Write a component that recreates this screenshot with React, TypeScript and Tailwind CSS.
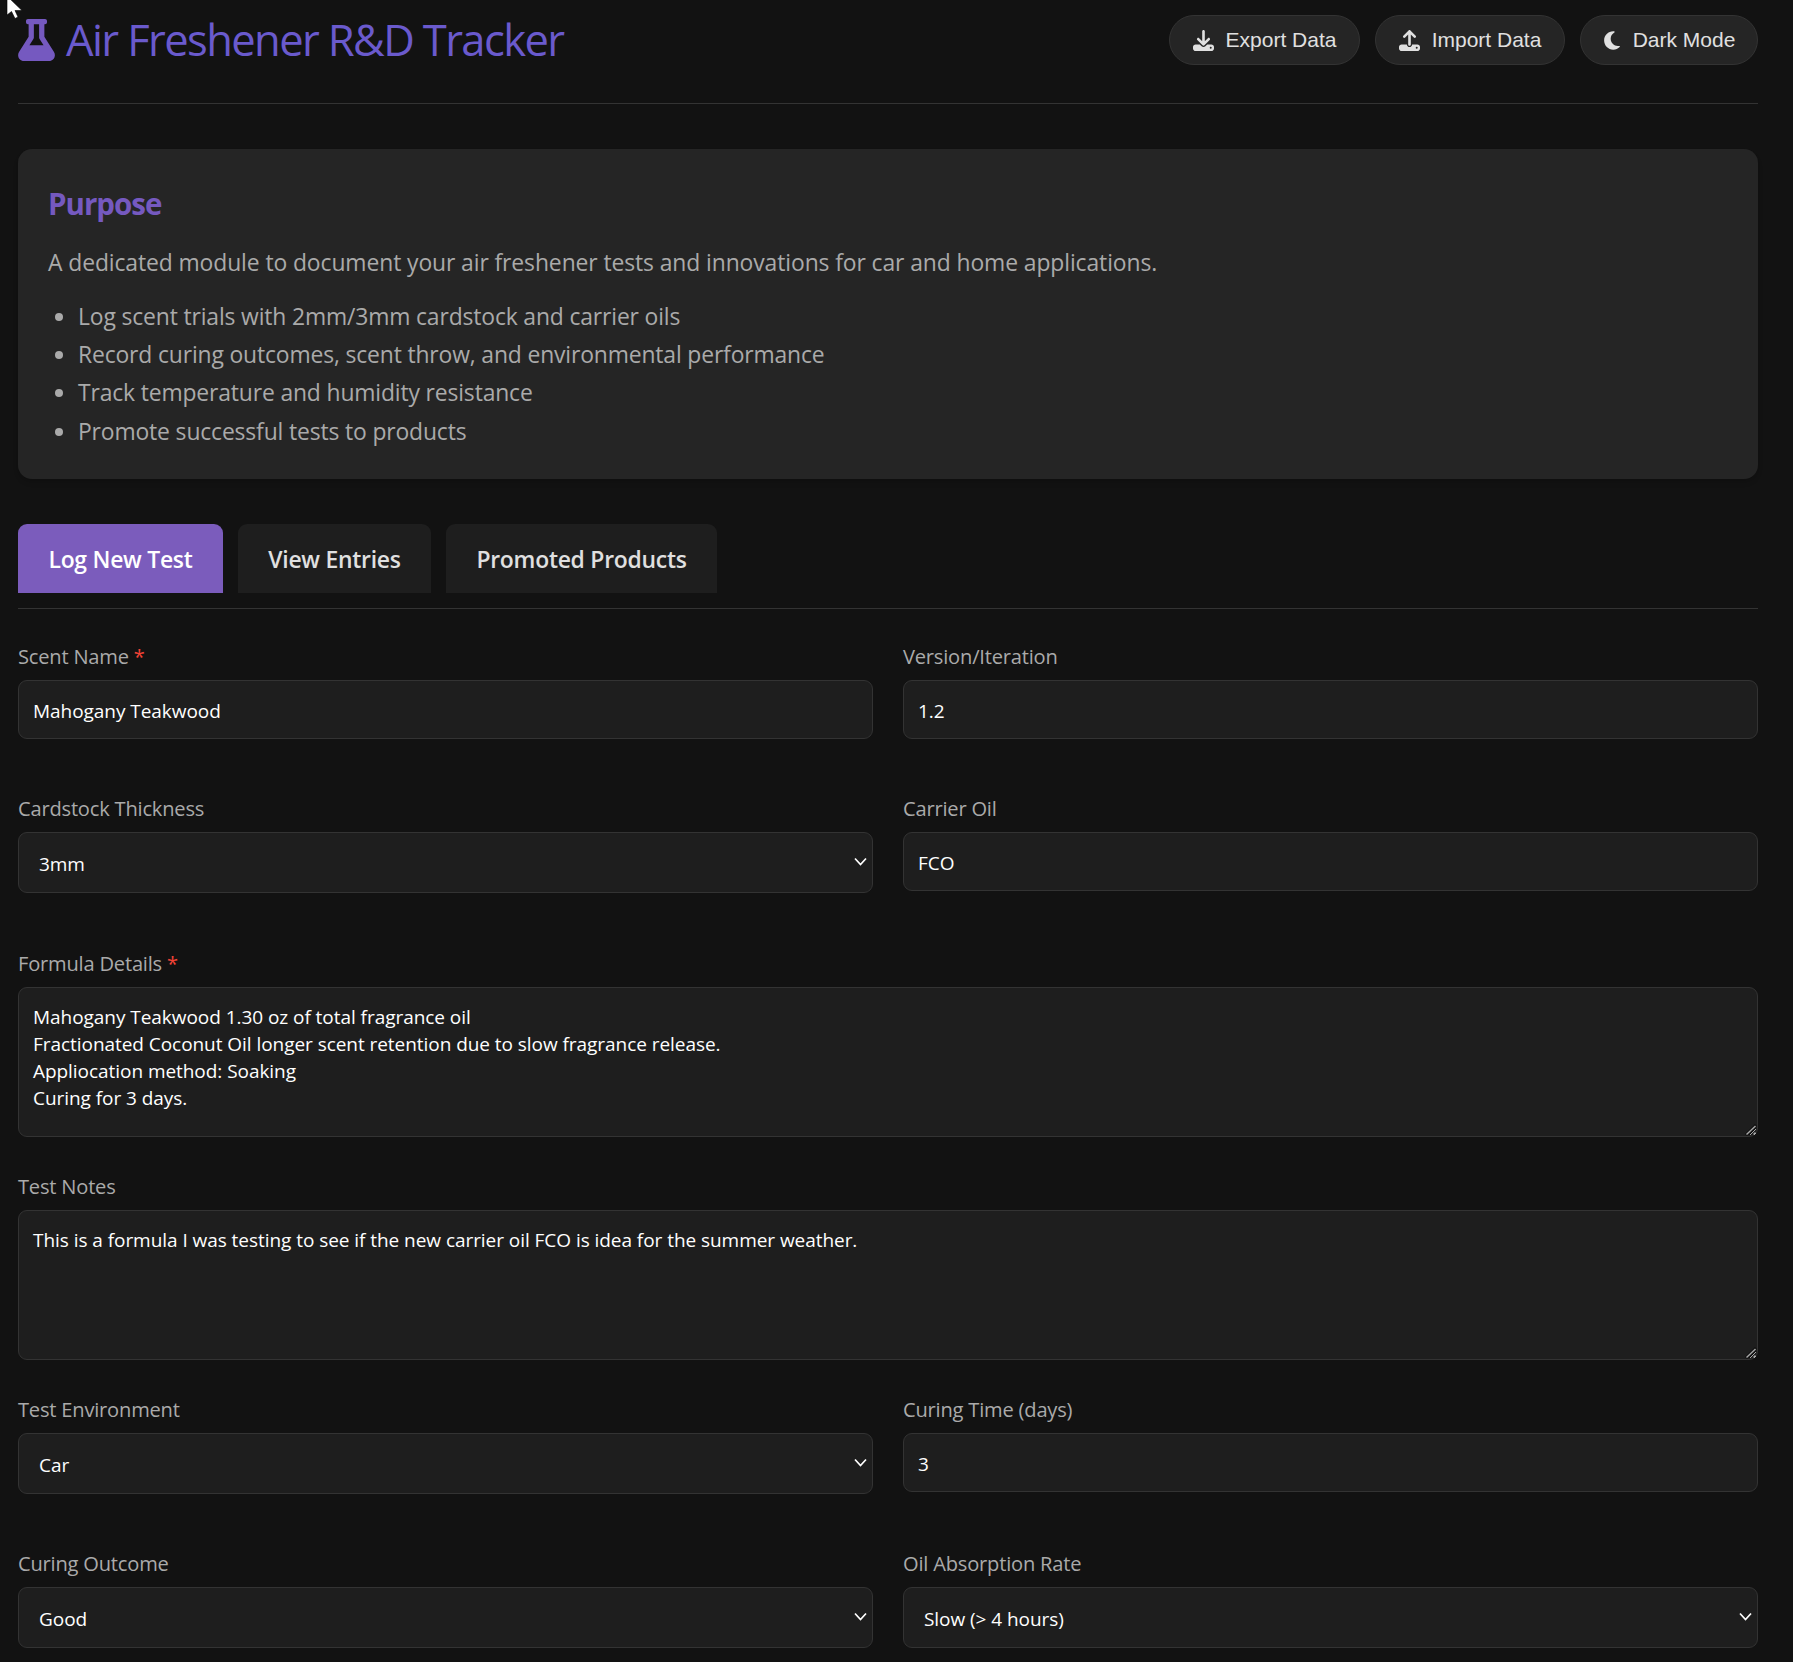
import { FaFlask } from 'react-icons/fa';
import { FaDownload, FaMoon, FaUpload } from 'react-icons/fa6';

const inputCls =
    'block w-full h-[59px] pl-[14px] pr-[14px] pt-[2px] rounded-[9px] border border-[#333333] bg-[#1e1e1e] text-[19px] tracking-[-0.05px] text-white outline-none';
const selectCls =
    'block w-full h-[61px] pl-[20px] pr-[30px] pt-[2px] appearance-none rounded-[9px] border border-[#333333] bg-[#1e1e1e] text-[19px] tracking-[-0.05px] text-white outline-none';
const textareaCls =
    'block w-full h-[150px] px-[14px] pt-[16px] pb-[16px] rounded-[9px] border border-[#333333] bg-[#1e1e1e] text-[19px] leading-[27px] tracking-[-0.05px] text-white outline-none [color-scheme:dark]';

const Label = ({ text, required }: { text: string; required?: boolean }) => (
    <label className="block h-[24px] mb-[12px] text-[20.1px] leading-[26px] tracking-[-0.2px] text-[#aaaaaa]">
        {text}
        {required && <span className="text-[#f44336]"> *</span>}
    </label>
);

const Select = ({ value, options }: { value: string; options: string[] }) => (
    <div className="relative">
        <select className={selectCls} defaultValue={value}>
            {options.map((o) => (
                <option key={o}>{o}</option>
            ))}
        </select>
        <svg className="pointer-events-none absolute right-[6px] top-[25px]" width="13" height="9" viewBox="0 0 13 9" fill="none">
            <path d="M1 1.5 L6.5 7.5 L12 1.5" stroke="#ffffff" strokeWidth="1.7" />
        </svg>
    </div>
);

const TextArea = ({ value }: { value: string }) => (
    <div className="relative">
        <textarea className={textareaCls} defaultValue={value} />
        {/* resize grip */}
        <svg className="pointer-events-none absolute bottom-[1px] right-[1px]" width="13" height="13" viewBox="0 0 13 13" fill="none">
            <path d="M2 12 L12 2" stroke="#0f0f0f" strokeWidth="3" />
            <path d="M2.5 11.5 L11.5 3" stroke="#a8a8a8" strokeWidth="1.4" />
            <path d="M9.5 11.5 L11.5 9.5" stroke="#a8a8a8" strokeWidth="1.4" />
        </svg>
    </div>
);

const App = () => {
    const points = [
        'Log scent trials with 2mm/3mm cardstock and carrier oils',
        'Record curing outcomes, scent throw, and environmental performance',
        'Track temperature and humidity resistance',
        'Promote successful tests to products',
    ];

    return (
        <div className="relative h-[1662px] overflow-hidden bg-[#121212] pl-[18px] pr-[35px] font-['Open_Sans',sans-serif]">
            {/* mouse pointer */}
            <svg className="absolute left-[6px] top-0" width="18" height="20" viewBox="0 0 18 20">
                <path d="M1 -4 L1 15 L5.5 11.5 L9 18.5 L12 17 L9 10.5 L16 10.5 Z" fill="#ffffff" stroke="#000000" strokeWidth="0.6" />
            </svg>

            {/* Header */}
            <header className="flex h-[104px] items-start justify-between border-b border-[#333333] pt-[15px]">
                <h1 className="flex items-center gap-[11px] pt-[4px] text-[43.5px] font-medium leading-[42px] tracking-[-1.6px] text-[#6a5acd]">
                    <FaFlask className="h-[42px] w-[37px] text-[#7559c0]" />
                    <span>Air Freshener R&amp;D Tracker</span>
                </h1>
                <div className="flex gap-[15px] font-['Liberation_Sans',sans-serif] text-[21px] text-[#e0e0e0]">
                    <button className="flex h-[50px] w-[191px] items-center justify-center gap-[12px] rounded-full border border-[#333333] bg-[#252525]">
                        <FaDownload className="h-[21px] w-[21px]" />
                        Export Data
                    </button>
                    <button className="flex h-[50px] w-[190px] items-center justify-center gap-[12px] rounded-full border border-[#333333] bg-[#252525]">
                        <FaUpload className="h-[21px] w-[21px]" />
                        Import Data
                    </button>
                    <button className="flex h-[50px] w-[178px] items-center justify-center gap-[12px] rounded-full border border-[#333333] bg-[#252525]">
                        <FaMoon className="h-[21px] w-[18px]" />
                        Dark Mode
                    </button>
                </div>
            </header>

            {/* Purpose */}
            <section className="mt-[45px] h-[330px] rounded-[14px] bg-[#252525] px-[30px] pt-[36px] shadow-md">
                <h2 className="text-[29.5px] font-bold leading-[38px] tracking-[-1px] text-[#7559c0]">Purpose</h2>
                <p className="mt-[21px] text-[22.9px] leading-[38px] tracking-[-0.1px] text-[#aaaaaa]">
                    A dedicated module to document your air freshener tests and innovations for car and home applications.
                </p>
                <ul className="mt-[16px] list-disc pl-[30px] text-[22.9px] leading-[38.2px] tracking-[-0.15px] text-[#aaaaaa]">
                    {points.map((p) => (
                        <li key={p}>{p}</li>
                    ))}
                </ul>
            </section>

            {/* Tabs */}
            <nav className="mt-[45px] flex h-[84.7px] gap-[15px] border-b border-[#333333]">
                <button className="h-[68.7px] w-[205px] rounded-t-[9px] bg-[#7b5cbc] pt-[3px] text-[22.9px] font-semibold tracking-[-0.25px] text-white">
                    Log New Test
                </button>
                <button className="h-[68.7px] w-[193px] rounded-t-[9px] bg-[#1e1e1e] pt-[3px] text-[22.9px] font-semibold tracking-[-0.25px] text-[#e0e0e0]">
                    View Entries
                </button>
                <button className="h-[68.7px] w-[271px] rounded-t-[9px] bg-[#1e1e1e] pt-[3px] text-[22.9px] font-semibold tracking-[-0.25px] text-[#e0e0e0]">
                    Promoted Products
                </button>
            </nav>

            {/* Form */}
            <form className="pt-[35.7px]">
                <div className="mb-[57px] grid grid-cols-2 gap-x-[30px]">
                    <div>
                        <Label text="Scent Name" required />
                        <input className={inputCls} defaultValue="Mahogany Teakwood" />
                    </div>
                    <div>
                        <Label text="Version/Iteration" />
                        <input className={inputCls} defaultValue="1.2" />
                    </div>
                </div>
                <div className="mb-[58px] grid grid-cols-2 gap-x-[30px]">
                    <div>
                        <Label text="Cardstock Thickness" />
                        <Select value="3mm" options={['2mm', '3mm']} />
                    </div>
                    <div>
                        <Label text="Carrier Oil" />
                        <input className={inputCls} defaultValue="FCO" />
                    </div>
                </div>
                <div className="mb-[37px]">
                    <Label text="Formula Details" required />
                    <TextArea
                        value={
                            'Mahogany Teakwood 1.30 oz of total fragrance oil\nFractionated Coconut Oil longer scent retention due to slow fragrance release.\nAppliocation method: Soaking\nCuring for 3 days.'
                        }
                    />
                </div>
                <div className="mb-[37px]">
                    <Label text="Test Notes" />
                    <TextArea value="This is a formula I was testing to see if the new carrier oil FCO is idea for the summer weather." />
                </div>
                <div className="mb-[57px] grid grid-cols-2 gap-x-[30px]">
                    <div>
                        <Label text="Test Environment" />
                        <Select value="Car" options={['Car', 'Home']} />
                    </div>
                    <div>
                        <Label text="Curing Time (days)" />
                        <input className={inputCls} defaultValue="3" />
                    </div>
                </div>
                <div className="grid grid-cols-2 gap-x-[30px]">
                    <div>
                        <Label text="Curing Outcome" />
                        <Select value="Good" options={['Good', 'Fair', 'Poor']} />
                    </div>
                    <div>
                        <Label text="Oil Absorption Rate" />
                        <Select value="Slow (> 4 hours)" options={['Fast (< 1 hour)', 'Slow (> 4 hours)']} />
                    </div>
                </div>
            </form>
        </div>
    );
};

export default App;
